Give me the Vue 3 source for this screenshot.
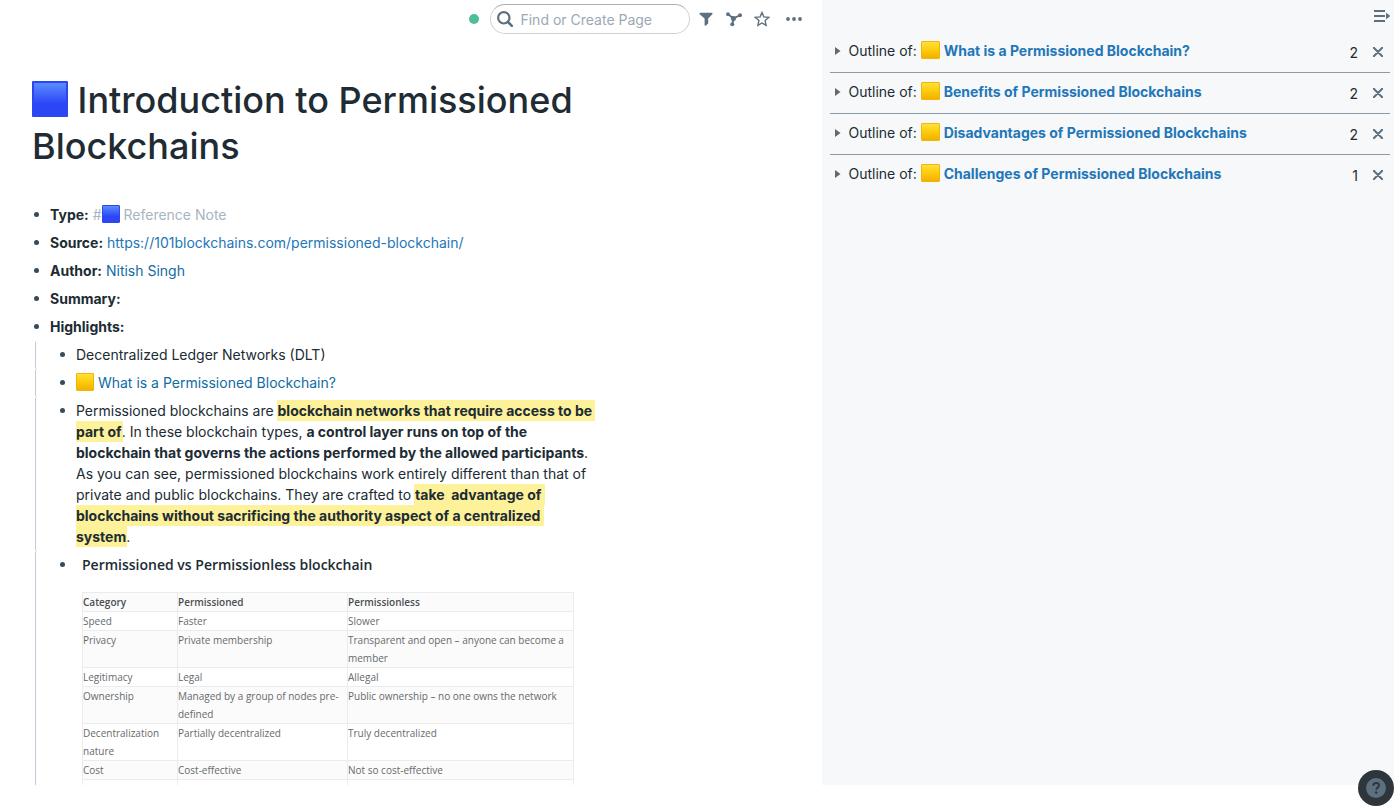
<script setup>
import { ref } from 'vue'

const query = ref('')

const outlines = [
  { title: 'What is a Permissioned Blockchain?', count: 2 },
  { title: 'Benefits of Permissioned Blockchains', count: 2 },
  { title: 'Disadvantages of Permissioned Blockchains', count: 2 },
  { title: 'Challenges of Permissioned Blockchains', count: 1 },
]

const rows = [
  ['Speed', 'Faster', 'Slower'],
  ['Privacy', 'Private membership', 'Transparent and open – anyone can become a member'],
  ['Legitimacy', 'Legal', 'Allegal'],
  ['Ownership', 'Managed by a group of nodes pre-defined', 'Public ownership – no one owns the network'],
  ['Decentralization nature', 'Partially decentralized', 'Truly decentralized'],
  ['Cost', 'Cost-effective', 'Not so cost-effective'],
  ['Security', 'Less secure', 'More secure'],
]
</script>

<template>
  <div class="app">
    <main class="main">
      <header class="topbar">
        <span class="status"></span>
        <div class="search">
          <svg viewBox="0 0 16 16" width="16" height="16" aria-hidden="true">
            <circle cx="6.8" cy="6.8" r="5.7" fill="none" stroke="#5c7080" stroke-width="2.2" />
            <path d="M11 11l3.8 3.8" stroke="#5c7080" stroke-width="2.6" stroke-linecap="round" />
          </svg>
          <input v-model="query" type="text" placeholder="Find or Create Page" aria-label="Find or Create Page" />
        </div>
        <button class="tool" aria-label="Filter">
          <svg viewBox="0 0 16 16" width="16" height="16">
            <path d="M2.2 1.800h11.600c.7 0 1 .9.5 1.400L10.200 7.400v4.700c0 .3-.1.5-.3.7l-2 1.700c-.5.4-1.300.1-1.300-.6V7.400L1.700 3.200c-.5-.5-.2-1.400.5-1.400z" fill="#5c7080" />
          </svg>
        </button>
        <button class="tool" aria-label="Graph">
          <svg viewBox="0 0 16 16" width="16" height="16">
            <path d="M2 3.200L7.500 7.400L14 4.200M7.500 7.400L6.400 13.400" fill="none" stroke="#5c7080" stroke-width="1.800" />
            <path d="M4.300 5L10.500 6L7.200 11z" fill="#5c7080" />
            <circle cx="2" cy="3.200" r="1.900" fill="#5c7080" />
            <circle cx="14" cy="4.200" r="2" fill="#5c7080" />
            <circle cx="6.300" cy="13.300" r="2" fill="#5c7080" />
            <circle cx="7.400" cy="7.400" r="2.500" fill="#5c7080" />
          </svg>
        </button>
        <button class="tool" aria-label="Star page">
          <svg viewBox="0 0 16 16" width="16" height="16">
            <path d="M8 1.500l1.900 4.400 4.800.5-3.600 3.200 1 4.800L8 12l-4.100 2.400 1-4.800L1.300 6.400l4.800-.5z" fill="none" stroke="#5c7080" stroke-width="1.400" />
          </svg>
        </button>
        <button class="tool more" aria-label="More">
          <svg viewBox="0 0 16 16" width="16" height="16">
            <circle cx="2" cy="8" r="1.900" fill="#5c7080" />
            <circle cx="8" cy="8" r="1.900" fill="#5c7080" />
            <circle cx="14" cy="8" r="1.900" fill="#5c7080" />
          </svg>
        </button>
      </header>

      <article class="page">
        <h1><i class="square blue"></i> Introduction to Permissioned Blockchains</h1>
        <ul class="blocks">
          <li><p><b>Type:</b> <a href="#" class="tag">#<i class="square blue"></i> Reference Note</a></p></li>
          <li><p><b>Source:</b> <a href="#" class="url">https://101blockchains.com/permissioned-blockchain/</a></p></li>
          <li><p><b>Author:</b> <a href="#">Nitish Singh</a></p></li>
          <li><p><b>Summary:</b></p></li>
          <li><p><b>Highlights:</b></p></li>
        </ul>
        <ul class="blocks nested">
          <li><p>Decentralized Ledger Networks (DLT)</p></li>
          <li><p><i class="square yellow"></i> <a href="#">What is a Permissioned Blockchain?</a></p></li>
          <li>
            <p>Permissioned blockchains are <mark>blockchain networks that require access to be part of</mark>. In these blockchain types, <b>a control layer runs on top of the blockchain that governs the actions performed by the allowed participants</b>. As you can see, permissioned blockchains work entirely different than that of private and public blockchains. They are crafted to <mark>take&nbsp; advantage of blockchains without sacrificing the authority aspect of a centralized system</mark>.</p>
          </li>
          <li>
            <section class="figure">
              <h2>Permissioned vs Permissionless blockchain</h2>
              <table>
                <colgroup><col class="c1" /><col class="c2" /><col class="c3" /></colgroup>
                <thead>
                  <tr><th>Category</th><th>Permissioned</th><th>Permissionless</th></tr>
                </thead>
                <tbody>
                  <tr v-for="row in rows" :key="row[0]">
                    <td v-for="cell in row" :key="cell">{{ cell }}</td>
                  </tr>
                </tbody>
              </table>
            </section>
          </li>
        </ul>
      </article>
    </main>

    <aside class="sidebar">
      <div class="sidebar-top">
        <button aria-label="Close sidebar">
          <svg viewBox="0 0 16 12" width="16" height="12">
            <path d="M0 1h11M0 6h11M0 11h11" stroke="#5c7080" stroke-width="2" />
            <path d="M12 2.800l3.500 2.500c.5.400.5 1 0 1.400L12 9.200z" fill="#5c7080" />
          </svg>
        </button>
      </div>
      <section v-for="item in outlines" :key="item.title" class="outline">
        <button class="caret" aria-label="Expand">
          <svg viewBox="0 0 6 8" width="6" height="8"><path d="M0 0l5.500 4L0 8z" fill="#5f6b73" /></svg>
        </button>
        <p>Outline of: <i class="square yellow"></i> <a href="#">{{ item.title }}</a></p>
        <span class="count">{{ item.count }}</span>
        <button class="close" aria-label="Close">
          <svg viewBox="0 0 10 10" width="10" height="10">
            <path d="M.8.8l8.400 8.400M9.200.8L.8 9.200" stroke="#5c7080" stroke-width="2" stroke-linecap="round" />
          </svg>
        </button>
      </section>
    </aside>

    <button class="help" aria-label="Help">
      <svg viewBox="0 0 20 20" width="20" height="20">
        <circle cx="10" cy="10" r="10" fill="#5c7080" />
        <path d="M7.200 7.700C7.300 5.800 8.500 5 10.100 5c1.700 0 2.900.9 2.900 2.400 0 2.100-2.600 2.100-2.700 4.300" fill="none" stroke="#2f363b" stroke-width="2" />
        <circle cx="10.200" cy="14.600" r="1.300" fill="#2f363b" />
      </svg>
    </button>
  </div>
</template>

<style>
body {
  background: #fff;
  overflow: hidden;
}
</style>

<style scoped>
.app {
  display: flex;
  height: calc(100vh - 23px);
  font-family: Inter, "Liberation Sans", sans-serif;
  font-size: 14px;
  line-height: 21px;
  color: #202b33;
}
button {
  display: flex;
  align-items: center;
  justify-content: center;
  padding: 0;
  border: 0;
  background: none;
  cursor: pointer;
}
p, h1, h2, ul {
  margin: 0;
  padding: 0;
  list-style: none;
}
a {
  color: #106ba3;
  text-decoration: none;
}
b, mark {
  font-weight: 700;
}
.main {
  flex: 1;
  min-width: 0;
  overflow: hidden;
}
.topbar {
  display: flex;
  align-items: center;
  justify-content: flex-end;
  gap: 12px;
  height: 38px;
  padding-right: 20px;
}
.status {
  width: 10px;
  height: 10px;
  margin-right: -1px;
  border-radius: 50%;
  background: #4cbf94;
}
.search {
  display: flex;
  align-items: center;
  gap: 7px;
  box-sizing: border-box;
  width: 200px;
  height: 30px;
  padding: 0 6px;
  margin-right: -4px;
  border: 1px solid #cfd2d4;
  border-top-color: #aeb1b3;
  border-radius: 15px;
  background: #fff;
}
.search input {
  flex: 1;
  min-width: 0;
  padding: 0;
  border: 0;
  outline: 0;
  background: none;
  font: inherit;
  color: inherit;
}
.search input::placeholder {
  color: #9aa9b5;
  opacity: 1;
}
.more {
  margin-left: 4px;
}
.page {
  padding: 39px 75px 0 32px;
}
h1 {
  max-width: 572px;
  margin-bottom: 32px;
  font-size: 36px;
  line-height: 46px;
  font-weight: 500;
}
.square {
  display: inline-block;
  width: 18px;
  height: 18px;
  box-sizing: border-box;
  border-radius: 1px;
  vertical-align: -3px;
}
.blue {
  border: 1px solid #2b46f2;
  background: linear-gradient(#5a8cff, #2b46f5 65%);
}
.yellow {
  border: 1px solid #f2b705;
  background: linear-gradient(#ffdf3f, #ffd012 40%, #f2b000);
}
h1 .square {
  width: 36px;
  height: 36px;
  border-width: 2px;
  vertical-align: -4px;
}
.blocks li {
  display: flex;
  padding: 3px 0 4px 2px;
}
.blocks li::before {
  content: "";
  flex: none;
  width: 5px;
  height: 5px;
  margin: 8px 11px 0 0;
  border-radius: 50%;
  background: #394b59;
}
.blocks p {
  white-space: pre-wrap;
  max-width: 521px;
}
.blocks .square {
  margin-top: -3px;
}
.nested {
  margin-left: 3px;
}
.nested li {
  padding-left: 24px;
  border-left: 1px solid #bfccd6;
  border-radius: 2px;
  background: linear-gradient(#e1e8ed, #e1e8ed) right top / 1px 1px no-repeat;
}
.tag {
  color: #a7b6c2;
}
.url {
  color: #2376b7;
}
mark {
  padding: 2px 1px;
  margin: 0 -1px;
  color: inherit;
  background: #fdf19a;
}
.figure {
  flex: 1;
  padding-left: 6px;
  font-family: "Open Sans", "Noto Sans", sans-serif;
}
h2 {
  font-size: 14px;
  line-height: 21px;
  font-weight: 600;
}
table {
  width: 492px;
  margin-top: 17px;
  border-collapse: collapse;
  table-layout: fixed;
  font-size: 10px;
  line-height: 18px;
  color: #666a6d;
}
.c1 { width: 95px; }
.c2 { width: 170px; }
.c3 { width: 226px; }
th, td {
  padding: 0;
  border: 1px solid #ececec;
  text-align: left;
  vertical-align: top;
}
th {
  font-weight: 600;
  color: #4a4e51;
}
thead tr, tbody tr:nth-child(even) {
  background: #fbfbfb;
}
.sidebar {
  flex: 0 0 41%;
  box-sizing: border-box;
  padding: 0 4px 0 8px;
  background: #f6f8fa;
}
.sidebar-top {
  display: flex;
  justify-content: flex-end;
  height: 32px;
}
.outline {
  display: flex;
  align-items: center;
  box-sizing: border-box;
  height: 41px;
  padding: 0 7px 2px 5px;
  border-bottom: 1px solid #8a9ba8;
}
.outline:last-child {
  border-bottom-color: transparent;
}
.outline p {
  flex: 1;
  padding-bottom: 2px;
  white-space: nowrap;
}
.outline .square {
  width: 19px;
}
.outline a {
  font-weight: 700;
  color: #2376b7;
}
.caret {
  width: 6px;
  margin-right: 7px;
}
.count {
  padding-top: 3px;
  margin-right: 15px;
}
.close {
  padding-top: 2px;
}
.help {
  position: fixed;
  right: 0;
  bottom: 2px;
  width: 36px;
  height: 36px;
  border-radius: 50%;
  background: #2f363b;
}
</style>
